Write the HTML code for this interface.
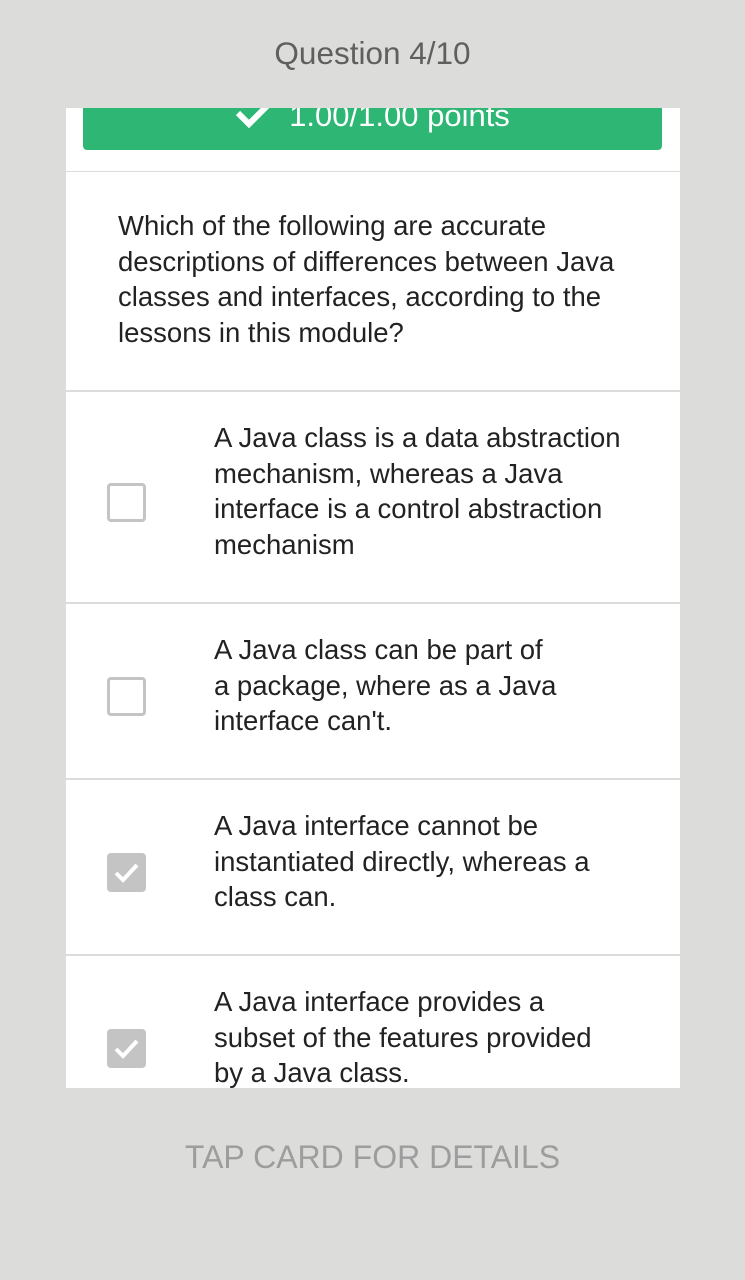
<!DOCTYPE html>
<html><head><style>
body{margin:0;width:745px;height:1280px;background:#dcdcda;font-family:"Liberation Sans",sans-serif;position:relative;overflow:hidden}
.title{position:absolute;top:35px;left:0;width:745px;text-align:center;font-size:31.5px;color:#5f5f5f}
.card{position:absolute;left:66px;top:108px;width:614px;height:980px;background:#fff;overflow:hidden}
.banner{position:absolute;left:17px;top:0;width:579px;height:42px;background:#2db674;border-radius:0 0 4px 4px;overflow:hidden}
.banner span{position:absolute;left:0;width:100%;top:-10px;text-align:center;color:#fff;font-size:31px;white-space:nowrap}
.hr{position:absolute;left:0;width:614px;height:2px;background:#dcdcdc}
.t{position:absolute;left:52px;font-size:27.5px;line-height:35.7px;color:#222;white-space:nowrap}
.o{left:148px}
.cb{position:absolute;left:41px;width:39px;height:39px;border:3px solid #c4c4c4;border-radius:4px;box-sizing:border-box}
.cb.c{background:#c4c4c4}
.tap{position:absolute;top:1139px;width:745px;text-align:center;font-size:32px;color:#9d9d9d}
</style></head><body>
<div class="title">Question 4/10</div>
<div class="card">
<div class="banner"><span><svg width="38" height="30" viewBox="0 0 38 30" style="vertical-align:-3px;margin-right:16px"><path d="M3 14 L14 25 L35 4" stroke="#fff" stroke-width="6" fill="none"/></svg>1.00/1.00 points</span></div>
<div class="hr" style="top:63px;height:1px"></div>
<div class="t" style="top:100px">Which of the following are accurate<br>descriptions of differences between Java<br>classes and interfaces, according to the<br>lessons in this module?</div>
<div class="hr" style="top:282px"></div>
<div class="t o" style="top:312px">A Java class is a data abstraction<br>mechanism, whereas a Java<br>interface is a control abstraction<br>mechanism</div>
<div class="cb" style="top:375px"></div>
<div class="hr" style="top:494px"></div>
<div class="t o" style="top:524px">A Java class can be part of<br>a package, where as a Java<br>interface can't.</div>
<div class="cb" style="top:569px"></div>
<div class="hr" style="top:670px"></div>
<div class="t o" style="top:700px">A Java interface cannot be<br>instantiated directly, whereas a<br>class can.</div>
<div class="cb c" style="top:745px"><svg width="39" height="39" viewBox="0 0 39 39" style="position:absolute;left:-3px;top:-3px"><path d="M9 20 L16 27 L30 12" stroke="#fff" stroke-width="4" fill="none"/></svg></div>
<div class="hr" style="top:846px"></div>
<div class="t o" style="top:876px">A Java interface provides a<br>subset of the features provided<br>by a Java class.</div>
<div class="cb c" style="top:921px"><svg width="39" height="39" viewBox="0 0 39 39" style="position:absolute;left:-3px;top:-3px"><path d="M9 20 L16 27 L30 12" stroke="#fff" stroke-width="4" fill="none"/></svg></div>
</div>
<div class="tap">TAP CARD FOR DETAILS</div>
</body></html>
